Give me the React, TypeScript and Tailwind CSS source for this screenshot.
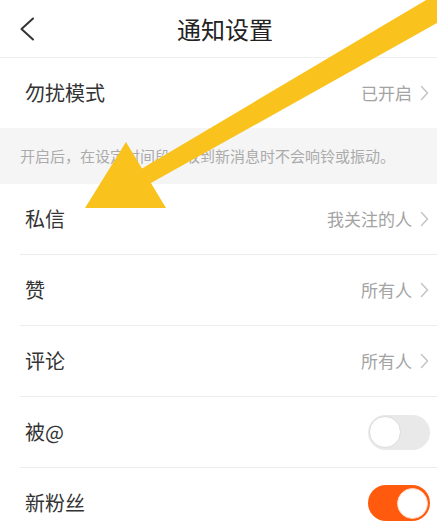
import React from "react";

function Chevron() {
  return (
    <svg width="9" height="16" viewBox="0 0 9 16" className="ml-[8px]">
      <path d="M1.5 1.5 L7.5 8 L1.5 14.5" fill="none" stroke="#c4c4c4" strokeWidth="1.5" strokeLinecap="round" strokeLinejoin="round" />
    </svg>
  );
}

function LinkRow({ label, value }: { label: string; value: string }) {
  return (
    <div className="h-[70px] flex items-center justify-between pl-[25px] pr-[8px]">
      <span className="text-[20px] text-[#333]">{label}</span>
      <span className="flex items-center text-[17px] text-[#a3a3a3]">
        {value}
        <Chevron />
      </span>
    </div>
  );
}

function Toggle({ on }: { on: boolean }) {
  return on ? (
    <div className="w-[62px] h-[36px] rounded-full bg-[#ff5a0d] flex items-center justify-end pr-[2px]">
      <div className="w-[31px] h-[31px] rounded-full bg-white border border-[#ffd2b8]" />
    </div>
  ) : (
    <div className="w-[62px] h-[35px] rounded-full bg-[#e9e9e9] flex items-center pl-[1px]">
      <div className="w-[32px] h-[32px] rounded-full bg-white border border-[#dcdcdc]" />
    </div>
  );
}

function ToggleRow({ label, on }: { label: string; on: boolean }) {
  return (
    <div className="h-[70px] flex items-center justify-between pl-[25px] pr-[7px]">
      <span className="text-[20px] text-[#333]">{label}</span>
      <Toggle on={on} />
    </div>
  );
}

function Divider() {
  return <div className="ml-[20px] h-px bg-[#ececec]" />;
}

export default function App() {
  return (
    <div className="relative w-[437px] h-[530px] overflow-hidden bg-white font-['Noto_Sans_CJK_SC',sans-serif]">
      <div className="h-[58px] border-b border-[#eeeeee] grid grid-cols-[1fr_auto_1fr] items-center">
        <div className="pl-[20px] flex items-center">
          <svg width="15" height="24" viewBox="0 0 15 24">
            <path d="M13 1.5 L1.5 12 L13 22.5" fill="none" stroke="#333" strokeWidth="2" strokeLinecap="round" strokeLinejoin="round" />
          </svg>
        </div>
        <div className="pl-[13px] text-[24px] text-[#222] leading-none">通知设置</div>
        <div />
      </div>

      <LinkRow label="勿扰模式" value="已开启" />

      <div className="h-[56px] bg-[#f5f5f5] flex items-center pl-[20px] text-[15px] text-[#ababab]">
        开启后，在设定时间段内收到新消息时不会响铃或振动。
      </div>

      <LinkRow label="私信" value="我关注的人" />
      <Divider />
      <LinkRow label="赞" value="所有人" />
      <Divider />
      <LinkRow label="评论" value="所有人" />
      <Divider />
      <ToggleRow label="被@" on={false} />
      <Divider />
      <ToggleRow label="新粉丝" on={true} />

      <svg className="absolute inset-0 pointer-events-none" width="437" height="530" viewBox="0 0 437 530">
        <polygon
          points="85,208 126,142 142,168.5 470,-26 470,4.5 150.9,183.1 166,208"
          fill="#f9c21c"
        />
      </svg>
    </div>
  );
}
